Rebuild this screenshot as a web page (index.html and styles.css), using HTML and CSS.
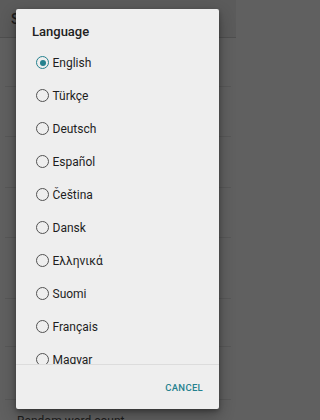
FILE: index.html
```html
<!DOCTYPE html>
<html lang="en">
<head>
<meta charset="utf-8">
<title>Language</title>
<link rel="stylesheet" href="styles.css">
</head>
<body>
<div class="screen">
  <header class="toolbar"><span class="toolbar-title">Settings</span></header>
  <div class="prefs">
    <div class="pref pref-48"></div>
    <div class="pref pref-49"></div>
    <div class="pref pref-50"></div>
    <div class="pref pref-49"></div>
    <div class="pref pref-60"></div>
    <div class="pref pref-47"></div>
    <div class="pref pref-52"></div>
    <div class="pref pref-last"><span class="pref-title">Random word count</span></div>
  </div>

  <div class="dialog" role="dialog">
    <div class="dialog-title">Language</div>
    <ul class="options">
      <li class="option"><span class="radio checked"></span><span>English</span></li>
      <li class="option"><span class="radio"></span><span>Türkçe</span></li>
      <li class="option"><span class="radio"></span><span>Deutsch</span></li>
      <li class="option"><span class="radio"></span><span>Español</span></li>
      <li class="option"><span class="radio"></span><span>Čeština</span></li>
      <li class="option"><span class="radio"></span><span>Dansk</span></li>
      <li class="option"><span class="radio"></span><span>Ελληνικά</span></li>
      <li class="option"><span class="radio"></span><span>Suomi</span></li>
      <li class="option"><span class="radio"></span><span>Français</span></li>
      <li class="option"><span class="radio"></span><span>Magyar</span></li>
    </ul>
    <div class="actions"><span class="btn">CANCEL</span></div>
  </div>
</div>
</body>
</html>
```

FILE: styles.css
```css
html, body {
  margin: 0;
  padding: 0;
  background: #606060;
}

body {
  font-family: Roboto, "Noto Sans", "Liberation Sans", sans-serif;
}

.screen {
  position: relative;
  width: 236px;
  height: 420px;
  overflow: hidden;
  background: #606060;
}

.toolbar {
  height: 37px;
  background: #5b5b5b;
  border-bottom: 1px solid #4f4f4f;
  display: flex;
  align-items: center;
  padding-left: 11px;
}

.toolbar-title {
  font-size: 14px;
  font-weight: 500;
  color: #1c1c1c;
}

.prefs {
  display: flex;
  flex-direction: column;
}

.pref {
  margin: 0 5px;
  border-bottom: 1px solid #585858;
}

.pref-47 { height: 47px; }
.pref-48 { height: 48px; }
.pref-49 { height: 49px; }
.pref-50 { height: 50px; }
.pref-52 { height: 52px; }
.pref-60 { height: 60px; }

.pref-last {
  border-bottom: none;
  padding: 10px 0 0 12px;
}

.pref-title {
  font-size: 12px;
  color: #1c1c1c;
}

.dialog {
  position: absolute;
  left: 16px;
  top: 9px;
  width: 203px;
  height: 400px;
  background: #eeeeee;
  border-radius: 2px;
  box-shadow: 0 6px 16px rgba(0, 0, 0, 0.3), 0 2px 4px rgba(0, 0, 0, 0.3);
  display: flex;
  flex-direction: column;
  overflow: hidden;
}

.dialog-title {
  padding: 15px 16px 6px;
  font-size: 13px;
  line-height: 16px;
  font-weight: 500;
  color: #212121;
}

.options {
  list-style: none;
  margin: 0;
  padding: 0;
  height: 318px;
  overflow: hidden;
  flex: none;
}

.option {
  height: 33px;
  display: flex;
  align-items: center;
  gap: 3.5px;
  padding-left: 20px;
  font-size: 12px;
  color: #1e1e1e;
}

.radio {
  width: 13px;
  height: 13px;
  box-sizing: border-box;
  border: 1.6px solid #525252;
  border-radius: 50%;
  display: flex;
  align-items: center;
  justify-content: center;
  flex: none;
}

.radio.checked {
  border-color: #25818e;
}

.radio.checked::after {
  content: "";
  width: 6px;
  height: 6px;
  border-radius: 50%;
  background: #25818e;
}

.actions {
  flex: 1;
  border-top: 1px solid #dcdcdc;
  display: flex;
  align-items: center;
  justify-content: flex-end;
  padding-right: 16px;
}

.btn {
  font-size: 9.5px;
  font-weight: 500;
  letter-spacing: 0.3px;
  color: #25818e;
}
```
